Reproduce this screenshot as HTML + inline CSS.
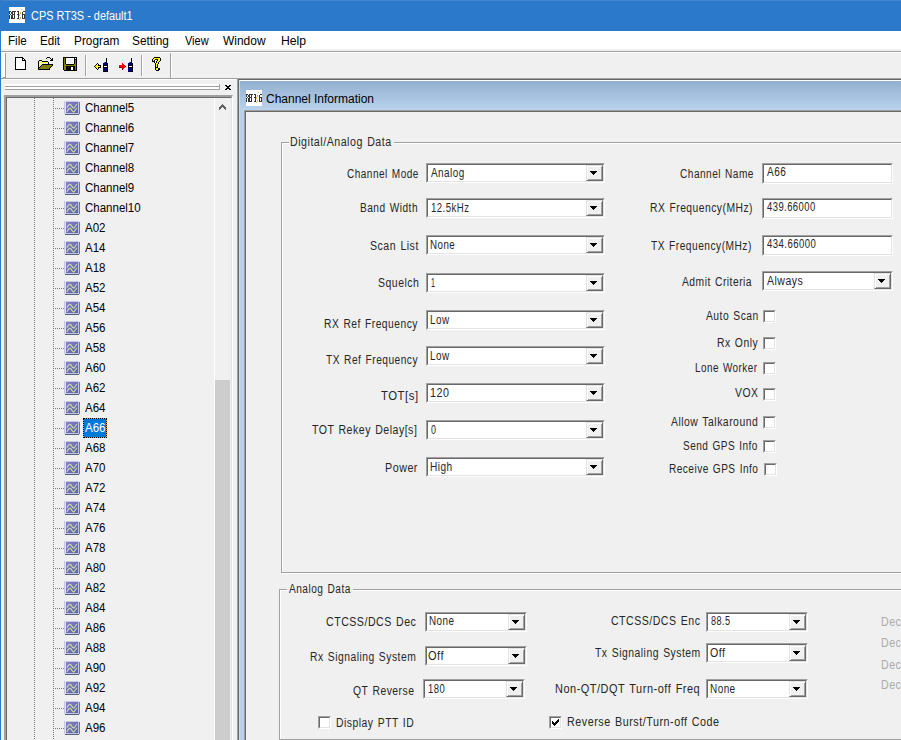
<!DOCTYPE html>
<html><head><meta charset="utf-8">
<style>
*{box-sizing:border-box}
html,body{margin:0;padding:0}
body{width:901px;height:740px;overflow:hidden;position:relative;background:#f0f0f0;font-family:"Liberation Sans",sans-serif}
.a{position:absolute}
.t{position:absolute;white-space:pre;font-size:12.5px;line-height:20px;transform-origin:0 0}
.cb{position:absolute;border-top:1px solid #a0a0a0;border-left:1px solid #a0a0a0;border-right:1px solid #fff;border-bottom:1px solid #fff}
.cbi{position:absolute;left:0;top:0;right:0;bottom:0;background:#fff;border-top:1px solid #696969;border-left:1px solid #696969;border-right:1px solid #e3e3e3;border-bottom:1px solid #e3e3e3}
.btn{position:absolute;right:0;top:0;bottom:0;width:17px;background:#f0f0f0;border-top:1px solid #e3e3e3;border-left:1px solid #e3e3e3;border-right:1px solid #696969;border-bottom:1px solid #696969;box-shadow:inset 1px 1px 0 #fff, inset -1px -1px 0 #a0a0a0}
.btn i{position:absolute;left:3px;top:5px;width:7px;height:4px;background:linear-gradient(#000,#000) 0 0/7px 1px no-repeat,linear-gradient(#000,#000) 1px 1px/5px 1px no-repeat,linear-gradient(#000,#000) 2px 2px/3px 1px no-repeat,linear-gradient(#000,#000) 3px 3px/1px 1px no-repeat}
.ck{position:absolute;width:13px;height:13px;border-top:1px solid #a0a0a0;border-left:1px solid #a0a0a0;border-right:1px solid #fff;border-bottom:1px solid #fff}
.cki{position:absolute;left:0;top:0;right:0;bottom:0;background:#fff;border-top:1px solid #696969;border-left:1px solid #696969;border-right:1px solid #e3e3e3;border-bottom:1px solid #e3e3e3}
.hd{position:absolute;left:55px;width:9px;height:1px;background:repeating-linear-gradient(90deg,#7a7a7a 0 1px,transparent 1px 2px)}
.ti{position:absolute;left:64px}
</style></head><body>
<svg width="0" height="0" style="position:absolute">
<defs>
<linearGradient id="ig" x1="0" y1="0" x2="1" y2="1"><stop offset="0" stop-color="#8a82cc"/><stop offset="1" stop-color="#5e5ca2"/></linearGradient>
<g id="ico">
<rect x="1" y="13" width="14" height="1" fill="#56607e"/>
<rect x="15" y="1" width="1" height="12" fill="#6a7490"/>
<rect x="0" y="0" width="15" height="13" fill="#c4c8e2"/>
<rect x="1" y="0" width="1" height="13" fill="#dfe3f2"/>
<rect x="2" y="1" width="12" height="11" fill="url(#ig)"/>
<path d="M3 6.8 C4.6 2.6, 6.4 2.4, 8 5.4 C9 7.2, 10 7.4, 10.8 6 L12.8 3" stroke="#c4dca4" stroke-width="1.15" fill="none"/>
<path d="M3 10.8 C4.6 6.6, 6.4 6.4, 8 9.4 C9 11.2, 10 11.4, 10.8 10 L12.8 7" stroke="#c4dca4" stroke-width="1.15" fill="none"/>
</g>
</defs></svg>

<!-- title bar -->
<div class="a" style="left:0;top:0;width:901px;height:31px;background:#2a79ca"></div>
<div class="a" style="left:0;top:0;width:901px;height:1px;background:#4284cc"></div>
<div class="a" style="left:0;top:0;width:1px;height:740px;background:#2b79c9"></div>
<div class="a" style="left:9px;top:7px;width:16px;height:16px;background:#fff"></div><svg class="a" style="left:9px;top:7px;" width="16" height="16" shape-rendering="crispEdges"><rect x="12" y="2" width="1" height="1" fill="#e8b050"/><rect x="0" y="4" width="2" height="1" fill="#383838"/><rect x="3" y="4" width="4" height="1" fill="#383838"/><rect x="8" y="4" width="2" height="1" fill="#383838"/><rect x="14" y="4" width="2" height="1" fill="#383838"/><rect x="0" y="5" width="1" height="1" fill="#383838"/><rect x="2" y="5" width="2" height="1" fill="#383838"/><rect x="5" y="5" width="1" height="1" fill="#383838"/><rect x="9" y="5" width="1" height="1" fill="#383838"/><rect x="11" y="5" width="1" height="1" fill="#e8b050"/><rect x="13" y="5" width="1" height="1" fill="#383838"/><rect x="0" y="6" width="1" height="1" fill="#383838"/><rect x="2" y="6" width="2" height="1" fill="#383838"/><rect x="5" y="6" width="1" height="1" fill="#383838"/><rect x="9" y="6" width="1" height="1" fill="#383838"/><rect x="11" y="6" width="1" height="1" fill="#e8b050"/><rect x="13" y="6" width="1" height="1" fill="#383838"/><rect x="1" y="7" width="1" height="1" fill="#383838"/><rect x="3" y="7" width="3" height="1" fill="#383838"/><rect x="8" y="7" width="2" height="1" fill="#383838"/><rect x="10" y="7" width="1" height="1" fill="#e8b050"/><rect x="13" y="7" width="3" height="1" fill="#383838"/><rect x="0" y="8" width="1" height="1" fill="#383838"/><rect x="2" y="8" width="2" height="1" fill="#383838"/><rect x="5" y="8" width="1" height="1" fill="#383838"/><rect x="9" y="8" width="1" height="1" fill="#383838"/><rect x="10" y="8" width="1" height="1" fill="#e8b050"/><rect x="13" y="8" width="1" height="1" fill="#383838"/><rect x="15" y="8" width="1" height="1" fill="#383838"/><rect x="0" y="9" width="1" height="1" fill="#383838"/><rect x="2" y="9" width="2" height="1" fill="#383838"/><rect x="5" y="9" width="1" height="1" fill="#383838"/><rect x="9" y="9" width="1" height="1" fill="#383838"/><rect x="13" y="9" width="1" height="1" fill="#383838"/><rect x="15" y="9" width="1" height="1" fill="#383838"/><rect x="0" y="10" width="1" height="1" fill="#383838"/><rect x="2" y="10" width="2" height="1" fill="#383838"/><rect x="5" y="10" width="1" height="1" fill="#383838"/><rect x="9" y="10" width="1" height="1" fill="#383838"/><rect x="11" y="10" width="1" height="1" fill="#e8b050"/><rect x="13" y="10" width="1" height="1" fill="#383838"/><rect x="15" y="10" width="1" height="1" fill="#383838"/><rect x="0" y="11" width="1" height="1" fill="#383838"/><rect x="2" y="11" width="4" height="1" fill="#383838"/><rect x="8" y="11" width="2" height="1" fill="#383838"/><rect x="11" y="11" width="1" height="1" fill="#e8b050"/><rect x="13" y="11" width="3" height="1" fill="#383838"/><rect x="10" y="12" width="1" height="1" fill="#e8b050"/></svg>
<!-- menu bar -->
<div class="a" style="left:1px;top:31px;width:900px;height:18px;background:#fff"></div>
<div class="a" style="left:1px;top:51px;width:900px;height:1px;background:#a0a0a0"></div>
<div class="a" style="left:1px;top:52px;width:900px;height:1px;background:#fff"></div>
<!-- toolbar -->
<div class="a" style="left:2px;top:53px;width:3px;height:24px;background:#fff"></div><div class="a" style="left:3px;top:77px;width:3px;height:1px;background:#a0a0a0"></div>
<div class="a" style="left:5px;top:53px;width:1px;height:25px;background:#a0a0a0"></div>
<div class="a" style="left:85px;top:55px;width:1px;height:21px;background:#a0a0a0"></div><div class="a" style="left:86px;top:55px;width:1px;height:21px;background:#fff"></div>
<div class="a" style="left:141px;top:55px;width:1px;height:21px;background:#a0a0a0"></div><div class="a" style="left:142px;top:55px;width:1px;height:21px;background:#fff"></div>
<div class="a" style="left:170px;top:53px;width:1px;height:25px;background:#a0a0a0"></div>
<div class="a" style="left:171px;top:53px;width:1px;height:25px;background:#fff"></div>
<div class="a" style="left:1px;top:78px;width:900px;height:1px;background:#a0a0a0"></div>
<div class="a" style="left:1px;top:79px;width:900px;height:1px;background:#fff"></div>
<!-- toolbar icons -->
<svg class="a" style="left:15px;top:57px;" width="11" height="13" shape-rendering="crispEdges"><rect x="0" y="0" width="8" height="1" fill="#000"/><rect x="0" y="1" width="1" height="1" fill="#000"/><rect x="1" y="1" width="6" height="1" fill="#fff"/><rect x="7" y="1" width="2" height="1" fill="#000"/><rect x="0" y="2" width="1" height="1" fill="#000"/><rect x="1" y="2" width="6" height="1" fill="#fff"/><rect x="7" y="2" width="1" height="1" fill="#000"/><rect x="8" y="2" width="1" height="1" fill="#fff"/><rect x="9" y="2" width="1" height="1" fill="#000"/><rect x="0" y="3" width="1" height="1" fill="#000"/><rect x="1" y="3" width="6" height="1" fill="#fff"/><rect x="7" y="3" width="4" height="1" fill="#000"/><rect x="0" y="4" width="1" height="1" fill="#000"/><rect x="1" y="4" width="9" height="1" fill="#fff"/><rect x="10" y="4" width="1" height="1" fill="#000"/><rect x="0" y="5" width="1" height="1" fill="#000"/><rect x="1" y="5" width="9" height="1" fill="#fff"/><rect x="10" y="5" width="1" height="1" fill="#000"/><rect x="0" y="6" width="1" height="1" fill="#000"/><rect x="1" y="6" width="9" height="1" fill="#fff"/><rect x="10" y="6" width="1" height="1" fill="#000"/><rect x="0" y="7" width="1" height="1" fill="#000"/><rect x="1" y="7" width="9" height="1" fill="#fff"/><rect x="10" y="7" width="1" height="1" fill="#000"/><rect x="0" y="8" width="1" height="1" fill="#000"/><rect x="1" y="8" width="9" height="1" fill="#fff"/><rect x="10" y="8" width="1" height="1" fill="#000"/><rect x="0" y="9" width="1" height="1" fill="#000"/><rect x="1" y="9" width="9" height="1" fill="#fff"/><rect x="10" y="9" width="1" height="1" fill="#000"/><rect x="0" y="10" width="1" height="1" fill="#000"/><rect x="1" y="10" width="9" height="1" fill="#fff"/><rect x="10" y="10" width="1" height="1" fill="#000"/><rect x="0" y="11" width="1" height="1" fill="#000"/><rect x="1" y="11" width="9" height="1" fill="#fff"/><rect x="10" y="11" width="1" height="1" fill="#000"/><rect x="0" y="12" width="11" height="1" fill="#000"/></svg>
<svg class="a" style="left:38px;top:57px;" width="16" height="13" shape-rendering="crispEdges"><rect x="9" y="0" width="3" height="1" fill="#000"/><rect x="8" y="1" width="1" height="1" fill="#000"/><rect x="12" y="1" width="1" height="1" fill="#000"/><rect x="14" y="1" width="1" height="1" fill="#000"/><rect x="13" y="2" width="2" height="1" fill="#000"/><rect x="1" y="3" width="3" height="1" fill="#000"/><rect x="12" y="3" width="3" height="1" fill="#000"/><rect x="0" y="4" width="1" height="1" fill="#000"/><rect x="1" y="4" width="1" height="1" fill="#ffff00"/><rect x="2" y="4" width="1" height="1" fill="#fff"/><rect x="3" y="4" width="1" height="1" fill="#ffff00"/><rect x="4" y="4" width="6" height="1" fill="#000"/><rect x="0" y="5" width="1" height="1" fill="#000"/><rect x="1" y="5" width="1" height="1" fill="#fff"/><rect x="2" y="5" width="1" height="1" fill="#ffff00"/><rect x="3" y="5" width="1" height="1" fill="#fff"/><rect x="4" y="5" width="1" height="1" fill="#ffff00"/><rect x="5" y="5" width="1" height="1" fill="#fff"/><rect x="6" y="5" width="1" height="1" fill="#ffff00"/><rect x="7" y="5" width="1" height="1" fill="#fff"/><rect x="8" y="5" width="1" height="1" fill="#ffff00"/><rect x="9" y="5" width="1" height="1" fill="#fff"/><rect x="10" y="5" width="1" height="1" fill="#000"/><rect x="0" y="6" width="1" height="1" fill="#000"/><rect x="1" y="6" width="1" height="1" fill="#ffff00"/><rect x="2" y="6" width="1" height="1" fill="#fff"/><rect x="3" y="6" width="1" height="1" fill="#ffff00"/><rect x="4" y="6" width="1" height="1" fill="#fff"/><rect x="5" y="6" width="1" height="1" fill="#ffff00"/><rect x="6" y="6" width="1" height="1" fill="#fff"/><rect x="7" y="6" width="1" height="1" fill="#ffff00"/><rect x="8" y="6" width="1" height="1" fill="#fff"/><rect x="9" y="6" width="1" height="1" fill="#ffff00"/><rect x="10" y="6" width="1" height="1" fill="#000"/><rect x="0" y="7" width="1" height="1" fill="#000"/><rect x="1" y="7" width="1" height="1" fill="#fff"/><rect x="2" y="7" width="1" height="1" fill="#ffff00"/><rect x="3" y="7" width="1" height="1" fill="#fff"/><rect x="4" y="7" width="11" height="1" fill="#000"/><rect x="0" y="8" width="1" height="1" fill="#000"/><rect x="1" y="8" width="1" height="1" fill="#ffff00"/><rect x="2" y="8" width="1" height="1" fill="#fff"/><rect x="3" y="8" width="1" height="1" fill="#000"/><rect x="4" y="8" width="10" height="1" fill="#808000"/><rect x="14" y="8" width="1" height="1" fill="#000"/><rect x="0" y="9" width="1" height="1" fill="#000"/><rect x="1" y="9" width="1" height="1" fill="#fff"/><rect x="2" y="9" width="1" height="1" fill="#000"/><rect x="3" y="9" width="10" height="1" fill="#808000"/><rect x="13" y="9" width="1" height="1" fill="#000"/><rect x="0" y="10" width="2" height="1" fill="#000"/><rect x="2" y="10" width="10" height="1" fill="#808000"/><rect x="12" y="10" width="1" height="1" fill="#000"/><rect x="0" y="11" width="1" height="1" fill="#000"/><rect x="1" y="11" width="10" height="1" fill="#808000"/><rect x="11" y="11" width="1" height="1" fill="#000"/><rect x="0" y="12" width="12" height="1" fill="#000"/></svg>
<svg class="a" style="left:63px;top:57px;" width="14" height="14" shape-rendering="crispEdges"><rect x="0" y="0" width="14" height="1" fill="#000"/><rect x="0" y="1" width="1" height="1" fill="#000"/><rect x="1" y="1" width="1" height="1" fill="#808000"/><rect x="2" y="1" width="1" height="1" fill="#000"/><rect x="3" y="1" width="8" height="1" fill="#fff"/><rect x="11" y="1" width="1" height="1" fill="#000"/><rect x="12" y="1" width="1" height="1" fill="#fff"/><rect x="13" y="1" width="1" height="1" fill="#000"/><rect x="0" y="2" width="1" height="1" fill="#000"/><rect x="1" y="2" width="1" height="1" fill="#808000"/><rect x="2" y="2" width="1" height="1" fill="#000"/><rect x="3" y="2" width="1" height="1" fill="#fff"/><rect x="4" y="2" width="6" height="1" fill="#f0f0f0"/><rect x="10" y="2" width="1" height="1" fill="#fff"/><rect x="11" y="2" width="3" height="1" fill="#000"/><rect x="0" y="3" width="1" height="1" fill="#000"/><rect x="1" y="3" width="1" height="1" fill="#808000"/><rect x="2" y="3" width="1" height="1" fill="#000"/><rect x="3" y="3" width="1" height="1" fill="#fff"/><rect x="4" y="3" width="6" height="1" fill="#f0f0f0"/><rect x="10" y="3" width="1" height="1" fill="#fff"/><rect x="11" y="3" width="1" height="1" fill="#000"/><rect x="12" y="3" width="1" height="1" fill="#808000"/><rect x="13" y="3" width="1" height="1" fill="#000"/><rect x="0" y="4" width="1" height="1" fill="#000"/><rect x="1" y="4" width="1" height="1" fill="#808000"/><rect x="2" y="4" width="1" height="1" fill="#000"/><rect x="3" y="4" width="1" height="1" fill="#fff"/><rect x="4" y="4" width="6" height="1" fill="#f0f0f0"/><rect x="10" y="4" width="1" height="1" fill="#fff"/><rect x="11" y="4" width="1" height="1" fill="#000"/><rect x="12" y="4" width="1" height="1" fill="#808000"/><rect x="13" y="4" width="1" height="1" fill="#000"/><rect x="0" y="5" width="1" height="1" fill="#000"/><rect x="1" y="5" width="1" height="1" fill="#808000"/><rect x="2" y="5" width="1" height="1" fill="#000"/><rect x="3" y="5" width="1" height="1" fill="#fff"/><rect x="4" y="5" width="6" height="1" fill="#f0f0f0"/><rect x="10" y="5" width="1" height="1" fill="#fff"/><rect x="11" y="5" width="1" height="1" fill="#000"/><rect x="12" y="5" width="1" height="1" fill="#808000"/><rect x="13" y="5" width="1" height="1" fill="#000"/><rect x="0" y="6" width="1" height="1" fill="#000"/><rect x="1" y="6" width="1" height="1" fill="#808000"/><rect x="2" y="6" width="1" height="1" fill="#000"/><rect x="3" y="6" width="8" height="1" fill="#fff"/><rect x="11" y="6" width="1" height="1" fill="#000"/><rect x="12" y="6" width="1" height="1" fill="#808000"/><rect x="13" y="6" width="1" height="1" fill="#000"/><rect x="0" y="7" width="1" height="1" fill="#000"/><rect x="1" y="7" width="2" height="1" fill="#808000"/><rect x="3" y="7" width="8" height="1" fill="#000"/><rect x="11" y="7" width="2" height="1" fill="#808000"/><rect x="13" y="7" width="1" height="1" fill="#000"/><rect x="0" y="8" width="1" height="1" fill="#000"/><rect x="1" y="8" width="12" height="1" fill="#808000"/><rect x="13" y="8" width="1" height="1" fill="#000"/><rect x="0" y="9" width="1" height="1" fill="#000"/><rect x="1" y="9" width="2" height="1" fill="#808000"/><rect x="3" y="9" width="9" height="1" fill="#000"/><rect x="12" y="9" width="1" height="1" fill="#808000"/><rect x="13" y="9" width="1" height="1" fill="#000"/><rect x="0" y="10" width="1" height="1" fill="#000"/><rect x="1" y="10" width="2" height="1" fill="#808000"/><rect x="3" y="10" width="5" height="1" fill="#000"/><rect x="8" y="10" width="2" height="1" fill="#fff"/><rect x="10" y="10" width="2" height="1" fill="#000"/><rect x="12" y="10" width="1" height="1" fill="#808000"/><rect x="13" y="10" width="1" height="1" fill="#000"/><rect x="0" y="11" width="1" height="1" fill="#000"/><rect x="1" y="11" width="2" height="1" fill="#808000"/><rect x="3" y="11" width="5" height="1" fill="#000"/><rect x="8" y="11" width="2" height="1" fill="#fff"/><rect x="10" y="11" width="2" height="1" fill="#000"/><rect x="12" y="11" width="1" height="1" fill="#808000"/><rect x="13" y="11" width="1" height="1" fill="#000"/><rect x="0" y="12" width="1" height="1" fill="#000"/><rect x="1" y="12" width="2" height="1" fill="#808000"/><rect x="3" y="12" width="5" height="1" fill="#000"/><rect x="8" y="12" width="2" height="1" fill="#fff"/><rect x="10" y="12" width="2" height="1" fill="#000"/><rect x="12" y="12" width="1" height="1" fill="#808000"/><rect x="13" y="12" width="1" height="1" fill="#000"/><rect x="0" y="13" width="1" height="1" fill="#fff"/><rect x="1" y="13" width="13" height="1" fill="#000"/></svg>
<svg class="a" style="left:96px;top:58px;" width="15" height="14" shape-rendering="crispEdges"><rect x="10" y="0" width="1" height="1" fill="#000"/><rect x="10" y="1" width="1" height="1" fill="#000"/><rect x="10" y="2" width="1" height="1" fill="#000"/><rect x="10" y="3" width="1" height="1" fill="#000"/><rect x="8" y="4" width="1" height="1" fill="#008080"/><rect x="9" y="4" width="1" height="1" fill="#000084"/><rect x="10" y="4" width="1" height="1" fill="#000"/><rect x="7" y="5" width="4" height="1" fill="#000084"/><rect x="11" y="5" width="1" height="1" fill="#000"/><rect x="7" y="6" width="4" height="1" fill="#000084"/><rect x="11" y="6" width="1" height="1" fill="#000"/><rect x="7" y="7" width="5" height="1" fill="#000"/><rect x="7" y="8" width="1" height="1" fill="#000"/><rect x="8" y="8" width="3" height="1" fill="#fff"/><rect x="11" y="8" width="1" height="1" fill="#000"/><rect x="7" y="9" width="5" height="1" fill="#000"/><rect x="7" y="10" width="4" height="1" fill="#000084"/><rect x="11" y="10" width="1" height="1" fill="#000"/><rect x="7" y="11" width="4" height="1" fill="#000084"/><rect x="11" y="11" width="1" height="1" fill="#000"/><rect x="7" y="12" width="4" height="1" fill="#000084"/><rect x="11" y="12" width="1" height="1" fill="#000"/><rect x="7" y="13" width="1" height="1" fill="#000084"/><rect x="8" y="13" width="4" height="1" fill="#000"/></svg>
<svg class="a" style="left:121px;top:58px;" width="15" height="14" shape-rendering="crispEdges"><rect x="10" y="0" width="1" height="1" fill="#000"/><rect x="10" y="1" width="1" height="1" fill="#000"/><rect x="10" y="2" width="1" height="1" fill="#000"/><rect x="10" y="3" width="1" height="1" fill="#000"/><rect x="8" y="4" width="1" height="1" fill="#008080"/><rect x="9" y="4" width="1" height="1" fill="#000084"/><rect x="10" y="4" width="1" height="1" fill="#000"/><rect x="7" y="5" width="4" height="1" fill="#000084"/><rect x="11" y="5" width="1" height="1" fill="#000"/><rect x="7" y="6" width="4" height="1" fill="#000084"/><rect x="11" y="6" width="1" height="1" fill="#000"/><rect x="7" y="7" width="5" height="1" fill="#000"/><rect x="7" y="8" width="1" height="1" fill="#000"/><rect x="8" y="8" width="3" height="1" fill="#fff"/><rect x="11" y="8" width="1" height="1" fill="#000"/><rect x="7" y="9" width="5" height="1" fill="#000"/><rect x="7" y="10" width="4" height="1" fill="#000084"/><rect x="11" y="10" width="1" height="1" fill="#000"/><rect x="7" y="11" width="4" height="1" fill="#000084"/><rect x="11" y="11" width="1" height="1" fill="#000"/><rect x="7" y="12" width="4" height="1" fill="#000084"/><rect x="11" y="12" width="1" height="1" fill="#000"/><rect x="7" y="13" width="1" height="1" fill="#000084"/><rect x="8" y="13" width="4" height="1" fill="#000"/></svg>
<svg class="a" style="left:93px;top:63px;" width="8" height="7" shape-rendering="crispEdges"><rect x="4" y="0" width="1" height="1" fill="#000"/><rect x="3" y="1" width="1" height="1" fill="#000"/><rect x="4" y="1" width="1" height="1" fill="#ffff00"/><rect x="5" y="1" width="1" height="1" fill="#000"/><rect x="2" y="2" width="1" height="1" fill="#000"/><rect x="3" y="2" width="2" height="1" fill="#ffff00"/><rect x="5" y="2" width="3" height="1" fill="#000"/><rect x="1" y="3" width="1" height="1" fill="#000"/><rect x="2" y="3" width="5" height="1" fill="#ffff00"/><rect x="7" y="3" width="1" height="1" fill="#000"/><rect x="2" y="4" width="1" height="1" fill="#000"/><rect x="3" y="4" width="2" height="1" fill="#ffff00"/><rect x="5" y="4" width="3" height="1" fill="#000"/><rect x="3" y="5" width="1" height="1" fill="#000"/><rect x="4" y="5" width="1" height="1" fill="#ffff00"/><rect x="5" y="5" width="1" height="1" fill="#000"/><rect x="4" y="6" width="1" height="1" fill="#000"/></svg>
<svg class="a" style="left:119px;top:63px;" width="7" height="7" shape-rendering="crispEdges"><rect x="3" y="0" width="1" height="1" fill="#ff0000"/><rect x="3" y="1" width="2" height="1" fill="#ff0000"/><rect x="0" y="2" width="6" height="1" fill="#ff0000"/><rect x="0" y="3" width="6" height="1" fill="#ff0000"/><rect x="6" y="3" width="1" height="1" fill="#000"/><rect x="0" y="4" width="3" height="1" fill="#800000"/><rect x="3" y="4" width="3" height="1" fill="#ff0000"/><rect x="3" y="5" width="1" height="1" fill="#800000"/><rect x="4" y="5" width="1" height="1" fill="#ff0000"/><rect x="3" y="6" width="1" height="1" fill="#800000"/></svg>
<svg class="a" style="left:150px;top:57px;" width="11" height="14" shape-rendering="crispEdges"><rect x="4" y="0" width="6" height="1" fill="#000"/><rect x="3" y="1" width="1" height="1" fill="#000"/><rect x="4" y="1" width="6" height="1" fill="#ffff00"/><rect x="10" y="1" width="1" height="1" fill="#000"/><rect x="2" y="2" width="1" height="1" fill="#000"/><rect x="3" y="2" width="2" height="1" fill="#ffff00"/><rect x="5" y="2" width="3" height="1" fill="#000"/><rect x="8" y="2" width="2" height="1" fill="#ffff00"/><rect x="10" y="2" width="1" height="1" fill="#000"/><rect x="2" y="3" width="1" height="1" fill="#000"/><rect x="3" y="3" width="1" height="1" fill="#ffff00"/><rect x="4" y="3" width="1" height="1" fill="#000"/><rect x="6" y="3" width="1" height="1" fill="#fff"/><rect x="7" y="3" width="1" height="1" fill="#000"/><rect x="8" y="3" width="2" height="1" fill="#ffff00"/><rect x="10" y="3" width="1" height="1" fill="#000"/><rect x="2" y="4" width="3" height="1" fill="#000"/><rect x="6" y="4" width="1" height="1" fill="#000"/><rect x="7" y="4" width="2" height="1" fill="#ffff00"/><rect x="9" y="4" width="1" height="1" fill="#000"/><rect x="4" y="5" width="1" height="1" fill="#000"/><rect x="5" y="5" width="1" height="1" fill="#fff"/><rect x="6" y="5" width="1" height="1" fill="#000"/><rect x="7" y="5" width="1" height="1" fill="#ffff00"/><rect x="8" y="5" width="1" height="1" fill="#000"/><rect x="5" y="6" width="1" height="1" fill="#000"/><rect x="6" y="6" width="2" height="1" fill="#ffff00"/><rect x="8" y="6" width="1" height="1" fill="#000"/><rect x="5" y="7" width="1" height="1" fill="#000"/><rect x="6" y="7" width="1" height="1" fill="#ffff00"/><rect x="7" y="7" width="1" height="1" fill="#000"/><rect x="5" y="8" width="1" height="1" fill="#000"/><rect x="6" y="8" width="1" height="1" fill="#ffff00"/><rect x="7" y="8" width="1" height="1" fill="#000"/><rect x="5" y="9" width="1" height="1" fill="#000"/><rect x="6" y="9" width="1" height="1" fill="#ffff00"/><rect x="7" y="9" width="1" height="1" fill="#000"/><rect x="5" y="10" width="3" height="1" fill="#000"/><rect x="5" y="11" width="1" height="1" fill="#000"/><rect x="6" y="11" width="2" height="1" fill="#ffff00"/><rect x="8" y="11" width="2" height="1" fill="#000"/><rect x="5" y="12" width="1" height="1" fill="#000"/><rect x="6" y="12" width="2" height="1" fill="#ffff00"/><rect x="8" y="12" width="2" height="1" fill="#000"/><rect x="6" y="13" width="3" height="1" fill="#000"/></svg>
<!-- dock panel -->
<div class="a" style="left:5px;top:84px;width:214px;height:2px;background:#fff"></div>
<div class="a" style="left:5px;top:86px;width:215px;height:1px;background:#a0a0a0"></div>
<div class="a" style="left:5px;top:87px;width:214px;height:2px;background:#fff"></div>
<div class="a" style="left:5px;top:89px;width:215px;height:1px;background:#a0a0a0"></div>
<div class="a" style="left:219px;top:84px;width:1px;height:6px;background:#a0a0a0"></div>
<svg class="a" style="left:225px;top:85px;" width="6" height="5" shape-rendering="crispEdges"><rect x="0" y="0" width="2" height="1" fill="#000"/><rect x="4" y="0" width="2" height="1" fill="#000"/><rect x="1" y="1" width="4" height="1" fill="#000"/><rect x="2" y="2" width="2" height="1" fill="#000"/><rect x="1" y="3" width="4" height="1" fill="#000"/><rect x="0" y="4" width="2" height="1" fill="#000"/><rect x="4" y="4" width="2" height="1" fill="#000"/></svg>
<!-- tree border -->
<div class="a" style="left:4px;top:95px;width:229px;height:645px;border-top:2px solid #a0a0a0;border-left:2px solid #a0a0a0;border-right:1px solid #fff"></div>
<div class="a" style="left:6px;top:97px;width:226px;height:643px;border-top:1px solid #696969;border-left:1px solid #696969;border-right:1px solid #e3e3e3"></div>
<!-- tree lines -->
<div class="a" style="left:34px;top:98px;width:1px;height:642px;background:repeating-linear-gradient(180deg,#7a7a7a 0 1px,transparent 1px 2px)"></div>
<div class="a" style="left:53px;top:98px;width:1px;height:642px;background:repeating-linear-gradient(180deg,#7a7a7a 0 1px,transparent 1px 2px)"></div>
<div class="hd" style="top:108px"></div><svg class="ti" style="top:101px" width="16" height="14">
<rect x="1" y="13" width="14" height="1" fill="#56607e"/>
<rect x="15" y="1" width="1" height="12" fill="#6a7490"/>
<rect x="0" y="0" width="15" height="13" fill="#c4c8e2"/>
<rect x="1" y="0" width="1" height="13" fill="#dfe3f2"/>
<rect x="2" y="1" width="12" height="11" fill="url(#ig)"/>
<path d="M3 6.8 C4.6 2.6, 6.4 2.4, 8 5.4 C9 7.2, 10 7.4, 10.8 6 L12.8 3" stroke="#c4dca4" stroke-width="1.15" fill="none"/>
<path d="M3 10.8 C4.6 6.6, 6.4 6.4, 8 9.4 C9 11.2, 10 11.4, 10.8 10 L12.8 7" stroke="#c4dca4" stroke-width="1.15" fill="none"/>
</svg>
<div class="hd" style="top:128px"></div><svg class="ti" style="top:121px" width="16" height="14">
<rect x="1" y="13" width="14" height="1" fill="#56607e"/>
<rect x="15" y="1" width="1" height="12" fill="#6a7490"/>
<rect x="0" y="0" width="15" height="13" fill="#c4c8e2"/>
<rect x="1" y="0" width="1" height="13" fill="#dfe3f2"/>
<rect x="2" y="1" width="12" height="11" fill="url(#ig)"/>
<path d="M3 6.8 C4.6 2.6, 6.4 2.4, 8 5.4 C9 7.2, 10 7.4, 10.8 6 L12.8 3" stroke="#c4dca4" stroke-width="1.15" fill="none"/>
<path d="M3 10.8 C4.6 6.6, 6.4 6.4, 8 9.4 C9 11.2, 10 11.4, 10.8 10 L12.8 7" stroke="#c4dca4" stroke-width="1.15" fill="none"/>
</svg>
<div class="hd" style="top:148px"></div><svg class="ti" style="top:141px" width="16" height="14">
<rect x="1" y="13" width="14" height="1" fill="#56607e"/>
<rect x="15" y="1" width="1" height="12" fill="#6a7490"/>
<rect x="0" y="0" width="15" height="13" fill="#c4c8e2"/>
<rect x="1" y="0" width="1" height="13" fill="#dfe3f2"/>
<rect x="2" y="1" width="12" height="11" fill="url(#ig)"/>
<path d="M3 6.8 C4.6 2.6, 6.4 2.4, 8 5.4 C9 7.2, 10 7.4, 10.8 6 L12.8 3" stroke="#c4dca4" stroke-width="1.15" fill="none"/>
<path d="M3 10.8 C4.6 6.6, 6.4 6.4, 8 9.4 C9 11.2, 10 11.4, 10.8 10 L12.8 7" stroke="#c4dca4" stroke-width="1.15" fill="none"/>
</svg>
<div class="hd" style="top:168px"></div><svg class="ti" style="top:161px" width="16" height="14">
<rect x="1" y="13" width="14" height="1" fill="#56607e"/>
<rect x="15" y="1" width="1" height="12" fill="#6a7490"/>
<rect x="0" y="0" width="15" height="13" fill="#c4c8e2"/>
<rect x="1" y="0" width="1" height="13" fill="#dfe3f2"/>
<rect x="2" y="1" width="12" height="11" fill="url(#ig)"/>
<path d="M3 6.8 C4.6 2.6, 6.4 2.4, 8 5.4 C9 7.2, 10 7.4, 10.8 6 L12.8 3" stroke="#c4dca4" stroke-width="1.15" fill="none"/>
<path d="M3 10.8 C4.6 6.6, 6.4 6.4, 8 9.4 C9 11.2, 10 11.4, 10.8 10 L12.8 7" stroke="#c4dca4" stroke-width="1.15" fill="none"/>
</svg>
<div class="hd" style="top:188px"></div><svg class="ti" style="top:181px" width="16" height="14">
<rect x="1" y="13" width="14" height="1" fill="#56607e"/>
<rect x="15" y="1" width="1" height="12" fill="#6a7490"/>
<rect x="0" y="0" width="15" height="13" fill="#c4c8e2"/>
<rect x="1" y="0" width="1" height="13" fill="#dfe3f2"/>
<rect x="2" y="1" width="12" height="11" fill="url(#ig)"/>
<path d="M3 6.8 C4.6 2.6, 6.4 2.4, 8 5.4 C9 7.2, 10 7.4, 10.8 6 L12.8 3" stroke="#c4dca4" stroke-width="1.15" fill="none"/>
<path d="M3 10.8 C4.6 6.6, 6.4 6.4, 8 9.4 C9 11.2, 10 11.4, 10.8 10 L12.8 7" stroke="#c4dca4" stroke-width="1.15" fill="none"/>
</svg>
<div class="hd" style="top:208px"></div><svg class="ti" style="top:201px" width="16" height="14">
<rect x="1" y="13" width="14" height="1" fill="#56607e"/>
<rect x="15" y="1" width="1" height="12" fill="#6a7490"/>
<rect x="0" y="0" width="15" height="13" fill="#c4c8e2"/>
<rect x="1" y="0" width="1" height="13" fill="#dfe3f2"/>
<rect x="2" y="1" width="12" height="11" fill="url(#ig)"/>
<path d="M3 6.8 C4.6 2.6, 6.4 2.4, 8 5.4 C9 7.2, 10 7.4, 10.8 6 L12.8 3" stroke="#c4dca4" stroke-width="1.15" fill="none"/>
<path d="M3 10.8 C4.6 6.6, 6.4 6.4, 8 9.4 C9 11.2, 10 11.4, 10.8 10 L12.8 7" stroke="#c4dca4" stroke-width="1.15" fill="none"/>
</svg>
<div class="hd" style="top:228px"></div><svg class="ti" style="top:221px" width="16" height="14">
<rect x="1" y="13" width="14" height="1" fill="#56607e"/>
<rect x="15" y="1" width="1" height="12" fill="#6a7490"/>
<rect x="0" y="0" width="15" height="13" fill="#c4c8e2"/>
<rect x="1" y="0" width="1" height="13" fill="#dfe3f2"/>
<rect x="2" y="1" width="12" height="11" fill="url(#ig)"/>
<path d="M3 6.8 C4.6 2.6, 6.4 2.4, 8 5.4 C9 7.2, 10 7.4, 10.8 6 L12.8 3" stroke="#c4dca4" stroke-width="1.15" fill="none"/>
<path d="M3 10.8 C4.6 6.6, 6.4 6.4, 8 9.4 C9 11.2, 10 11.4, 10.8 10 L12.8 7" stroke="#c4dca4" stroke-width="1.15" fill="none"/>
</svg>
<div class="hd" style="top:248px"></div><svg class="ti" style="top:241px" width="16" height="14">
<rect x="1" y="13" width="14" height="1" fill="#56607e"/>
<rect x="15" y="1" width="1" height="12" fill="#6a7490"/>
<rect x="0" y="0" width="15" height="13" fill="#c4c8e2"/>
<rect x="1" y="0" width="1" height="13" fill="#dfe3f2"/>
<rect x="2" y="1" width="12" height="11" fill="url(#ig)"/>
<path d="M3 6.8 C4.6 2.6, 6.4 2.4, 8 5.4 C9 7.2, 10 7.4, 10.8 6 L12.8 3" stroke="#c4dca4" stroke-width="1.15" fill="none"/>
<path d="M3 10.8 C4.6 6.6, 6.4 6.4, 8 9.4 C9 11.2, 10 11.4, 10.8 10 L12.8 7" stroke="#c4dca4" stroke-width="1.15" fill="none"/>
</svg>
<div class="hd" style="top:268px"></div><svg class="ti" style="top:261px" width="16" height="14">
<rect x="1" y="13" width="14" height="1" fill="#56607e"/>
<rect x="15" y="1" width="1" height="12" fill="#6a7490"/>
<rect x="0" y="0" width="15" height="13" fill="#c4c8e2"/>
<rect x="1" y="0" width="1" height="13" fill="#dfe3f2"/>
<rect x="2" y="1" width="12" height="11" fill="url(#ig)"/>
<path d="M3 6.8 C4.6 2.6, 6.4 2.4, 8 5.4 C9 7.2, 10 7.4, 10.8 6 L12.8 3" stroke="#c4dca4" stroke-width="1.15" fill="none"/>
<path d="M3 10.8 C4.6 6.6, 6.4 6.4, 8 9.4 C9 11.2, 10 11.4, 10.8 10 L12.8 7" stroke="#c4dca4" stroke-width="1.15" fill="none"/>
</svg>
<div class="hd" style="top:288px"></div><svg class="ti" style="top:281px" width="16" height="14">
<rect x="1" y="13" width="14" height="1" fill="#56607e"/>
<rect x="15" y="1" width="1" height="12" fill="#6a7490"/>
<rect x="0" y="0" width="15" height="13" fill="#c4c8e2"/>
<rect x="1" y="0" width="1" height="13" fill="#dfe3f2"/>
<rect x="2" y="1" width="12" height="11" fill="url(#ig)"/>
<path d="M3 6.8 C4.6 2.6, 6.4 2.4, 8 5.4 C9 7.2, 10 7.4, 10.8 6 L12.8 3" stroke="#c4dca4" stroke-width="1.15" fill="none"/>
<path d="M3 10.8 C4.6 6.6, 6.4 6.4, 8 9.4 C9 11.2, 10 11.4, 10.8 10 L12.8 7" stroke="#c4dca4" stroke-width="1.15" fill="none"/>
</svg>
<div class="hd" style="top:308px"></div><svg class="ti" style="top:301px" width="16" height="14">
<rect x="1" y="13" width="14" height="1" fill="#56607e"/>
<rect x="15" y="1" width="1" height="12" fill="#6a7490"/>
<rect x="0" y="0" width="15" height="13" fill="#c4c8e2"/>
<rect x="1" y="0" width="1" height="13" fill="#dfe3f2"/>
<rect x="2" y="1" width="12" height="11" fill="url(#ig)"/>
<path d="M3 6.8 C4.6 2.6, 6.4 2.4, 8 5.4 C9 7.2, 10 7.4, 10.8 6 L12.8 3" stroke="#c4dca4" stroke-width="1.15" fill="none"/>
<path d="M3 10.8 C4.6 6.6, 6.4 6.4, 8 9.4 C9 11.2, 10 11.4, 10.8 10 L12.8 7" stroke="#c4dca4" stroke-width="1.15" fill="none"/>
</svg>
<div class="hd" style="top:328px"></div><svg class="ti" style="top:321px" width="16" height="14">
<rect x="1" y="13" width="14" height="1" fill="#56607e"/>
<rect x="15" y="1" width="1" height="12" fill="#6a7490"/>
<rect x="0" y="0" width="15" height="13" fill="#c4c8e2"/>
<rect x="1" y="0" width="1" height="13" fill="#dfe3f2"/>
<rect x="2" y="1" width="12" height="11" fill="url(#ig)"/>
<path d="M3 6.8 C4.6 2.6, 6.4 2.4, 8 5.4 C9 7.2, 10 7.4, 10.8 6 L12.8 3" stroke="#c4dca4" stroke-width="1.15" fill="none"/>
<path d="M3 10.8 C4.6 6.6, 6.4 6.4, 8 9.4 C9 11.2, 10 11.4, 10.8 10 L12.8 7" stroke="#c4dca4" stroke-width="1.15" fill="none"/>
</svg>
<div class="hd" style="top:348px"></div><svg class="ti" style="top:341px" width="16" height="14">
<rect x="1" y="13" width="14" height="1" fill="#56607e"/>
<rect x="15" y="1" width="1" height="12" fill="#6a7490"/>
<rect x="0" y="0" width="15" height="13" fill="#c4c8e2"/>
<rect x="1" y="0" width="1" height="13" fill="#dfe3f2"/>
<rect x="2" y="1" width="12" height="11" fill="url(#ig)"/>
<path d="M3 6.8 C4.6 2.6, 6.4 2.4, 8 5.4 C9 7.2, 10 7.4, 10.8 6 L12.8 3" stroke="#c4dca4" stroke-width="1.15" fill="none"/>
<path d="M3 10.8 C4.6 6.6, 6.4 6.4, 8 9.4 C9 11.2, 10 11.4, 10.8 10 L12.8 7" stroke="#c4dca4" stroke-width="1.15" fill="none"/>
</svg>
<div class="hd" style="top:368px"></div><svg class="ti" style="top:361px" width="16" height="14">
<rect x="1" y="13" width="14" height="1" fill="#56607e"/>
<rect x="15" y="1" width="1" height="12" fill="#6a7490"/>
<rect x="0" y="0" width="15" height="13" fill="#c4c8e2"/>
<rect x="1" y="0" width="1" height="13" fill="#dfe3f2"/>
<rect x="2" y="1" width="12" height="11" fill="url(#ig)"/>
<path d="M3 6.8 C4.6 2.6, 6.4 2.4, 8 5.4 C9 7.2, 10 7.4, 10.8 6 L12.8 3" stroke="#c4dca4" stroke-width="1.15" fill="none"/>
<path d="M3 10.8 C4.6 6.6, 6.4 6.4, 8 9.4 C9 11.2, 10 11.4, 10.8 10 L12.8 7" stroke="#c4dca4" stroke-width="1.15" fill="none"/>
</svg>
<div class="hd" style="top:388px"></div><svg class="ti" style="top:381px" width="16" height="14">
<rect x="1" y="13" width="14" height="1" fill="#56607e"/>
<rect x="15" y="1" width="1" height="12" fill="#6a7490"/>
<rect x="0" y="0" width="15" height="13" fill="#c4c8e2"/>
<rect x="1" y="0" width="1" height="13" fill="#dfe3f2"/>
<rect x="2" y="1" width="12" height="11" fill="url(#ig)"/>
<path d="M3 6.8 C4.6 2.6, 6.4 2.4, 8 5.4 C9 7.2, 10 7.4, 10.8 6 L12.8 3" stroke="#c4dca4" stroke-width="1.15" fill="none"/>
<path d="M3 10.8 C4.6 6.6, 6.4 6.4, 8 9.4 C9 11.2, 10 11.4, 10.8 10 L12.8 7" stroke="#c4dca4" stroke-width="1.15" fill="none"/>
</svg>
<div class="hd" style="top:408px"></div><svg class="ti" style="top:401px" width="16" height="14">
<rect x="1" y="13" width="14" height="1" fill="#56607e"/>
<rect x="15" y="1" width="1" height="12" fill="#6a7490"/>
<rect x="0" y="0" width="15" height="13" fill="#c4c8e2"/>
<rect x="1" y="0" width="1" height="13" fill="#dfe3f2"/>
<rect x="2" y="1" width="12" height="11" fill="url(#ig)"/>
<path d="M3 6.8 C4.6 2.6, 6.4 2.4, 8 5.4 C9 7.2, 10 7.4, 10.8 6 L12.8 3" stroke="#c4dca4" stroke-width="1.15" fill="none"/>
<path d="M3 10.8 C4.6 6.6, 6.4 6.4, 8 9.4 C9 11.2, 10 11.4, 10.8 10 L12.8 7" stroke="#c4dca4" stroke-width="1.15" fill="none"/>
</svg>
<div class="hd" style="top:428px"></div><svg class="ti" style="top:421px" width="16" height="14">
<rect x="1" y="13" width="14" height="1" fill="#56607e"/>
<rect x="15" y="1" width="1" height="12" fill="#6a7490"/>
<rect x="0" y="0" width="15" height="13" fill="#c4c8e2"/>
<rect x="1" y="0" width="1" height="13" fill="#dfe3f2"/>
<rect x="2" y="1" width="12" height="11" fill="url(#ig)"/>
<path d="M3 6.8 C4.6 2.6, 6.4 2.4, 8 5.4 C9 7.2, 10 7.4, 10.8 6 L12.8 3" stroke="#c4dca4" stroke-width="1.15" fill="none"/>
<path d="M3 10.8 C4.6 6.6, 6.4 6.4, 8 9.4 C9 11.2, 10 11.4, 10.8 10 L12.8 7" stroke="#c4dca4" stroke-width="1.15" fill="none"/>
</svg>
<div class="hd" style="top:448px"></div><svg class="ti" style="top:441px" width="16" height="14">
<rect x="1" y="13" width="14" height="1" fill="#56607e"/>
<rect x="15" y="1" width="1" height="12" fill="#6a7490"/>
<rect x="0" y="0" width="15" height="13" fill="#c4c8e2"/>
<rect x="1" y="0" width="1" height="13" fill="#dfe3f2"/>
<rect x="2" y="1" width="12" height="11" fill="url(#ig)"/>
<path d="M3 6.8 C4.6 2.6, 6.4 2.4, 8 5.4 C9 7.2, 10 7.4, 10.8 6 L12.8 3" stroke="#c4dca4" stroke-width="1.15" fill="none"/>
<path d="M3 10.8 C4.6 6.6, 6.4 6.4, 8 9.4 C9 11.2, 10 11.4, 10.8 10 L12.8 7" stroke="#c4dca4" stroke-width="1.15" fill="none"/>
</svg>
<div class="hd" style="top:468px"></div><svg class="ti" style="top:461px" width="16" height="14">
<rect x="1" y="13" width="14" height="1" fill="#56607e"/>
<rect x="15" y="1" width="1" height="12" fill="#6a7490"/>
<rect x="0" y="0" width="15" height="13" fill="#c4c8e2"/>
<rect x="1" y="0" width="1" height="13" fill="#dfe3f2"/>
<rect x="2" y="1" width="12" height="11" fill="url(#ig)"/>
<path d="M3 6.8 C4.6 2.6, 6.4 2.4, 8 5.4 C9 7.2, 10 7.4, 10.8 6 L12.8 3" stroke="#c4dca4" stroke-width="1.15" fill="none"/>
<path d="M3 10.8 C4.6 6.6, 6.4 6.4, 8 9.4 C9 11.2, 10 11.4, 10.8 10 L12.8 7" stroke="#c4dca4" stroke-width="1.15" fill="none"/>
</svg>
<div class="hd" style="top:488px"></div><svg class="ti" style="top:481px" width="16" height="14">
<rect x="1" y="13" width="14" height="1" fill="#56607e"/>
<rect x="15" y="1" width="1" height="12" fill="#6a7490"/>
<rect x="0" y="0" width="15" height="13" fill="#c4c8e2"/>
<rect x="1" y="0" width="1" height="13" fill="#dfe3f2"/>
<rect x="2" y="1" width="12" height="11" fill="url(#ig)"/>
<path d="M3 6.8 C4.6 2.6, 6.4 2.4, 8 5.4 C9 7.2, 10 7.4, 10.8 6 L12.8 3" stroke="#c4dca4" stroke-width="1.15" fill="none"/>
<path d="M3 10.8 C4.6 6.6, 6.4 6.4, 8 9.4 C9 11.2, 10 11.4, 10.8 10 L12.8 7" stroke="#c4dca4" stroke-width="1.15" fill="none"/>
</svg>
<div class="hd" style="top:508px"></div><svg class="ti" style="top:501px" width="16" height="14">
<rect x="1" y="13" width="14" height="1" fill="#56607e"/>
<rect x="15" y="1" width="1" height="12" fill="#6a7490"/>
<rect x="0" y="0" width="15" height="13" fill="#c4c8e2"/>
<rect x="1" y="0" width="1" height="13" fill="#dfe3f2"/>
<rect x="2" y="1" width="12" height="11" fill="url(#ig)"/>
<path d="M3 6.8 C4.6 2.6, 6.4 2.4, 8 5.4 C9 7.2, 10 7.4, 10.8 6 L12.8 3" stroke="#c4dca4" stroke-width="1.15" fill="none"/>
<path d="M3 10.8 C4.6 6.6, 6.4 6.4, 8 9.4 C9 11.2, 10 11.4, 10.8 10 L12.8 7" stroke="#c4dca4" stroke-width="1.15" fill="none"/>
</svg>
<div class="hd" style="top:528px"></div><svg class="ti" style="top:521px" width="16" height="14">
<rect x="1" y="13" width="14" height="1" fill="#56607e"/>
<rect x="15" y="1" width="1" height="12" fill="#6a7490"/>
<rect x="0" y="0" width="15" height="13" fill="#c4c8e2"/>
<rect x="1" y="0" width="1" height="13" fill="#dfe3f2"/>
<rect x="2" y="1" width="12" height="11" fill="url(#ig)"/>
<path d="M3 6.8 C4.6 2.6, 6.4 2.4, 8 5.4 C9 7.2, 10 7.4, 10.8 6 L12.8 3" stroke="#c4dca4" stroke-width="1.15" fill="none"/>
<path d="M3 10.8 C4.6 6.6, 6.4 6.4, 8 9.4 C9 11.2, 10 11.4, 10.8 10 L12.8 7" stroke="#c4dca4" stroke-width="1.15" fill="none"/>
</svg>
<div class="hd" style="top:548px"></div><svg class="ti" style="top:541px" width="16" height="14">
<rect x="1" y="13" width="14" height="1" fill="#56607e"/>
<rect x="15" y="1" width="1" height="12" fill="#6a7490"/>
<rect x="0" y="0" width="15" height="13" fill="#c4c8e2"/>
<rect x="1" y="0" width="1" height="13" fill="#dfe3f2"/>
<rect x="2" y="1" width="12" height="11" fill="url(#ig)"/>
<path d="M3 6.8 C4.6 2.6, 6.4 2.4, 8 5.4 C9 7.2, 10 7.4, 10.8 6 L12.8 3" stroke="#c4dca4" stroke-width="1.15" fill="none"/>
<path d="M3 10.8 C4.6 6.6, 6.4 6.4, 8 9.4 C9 11.2, 10 11.4, 10.8 10 L12.8 7" stroke="#c4dca4" stroke-width="1.15" fill="none"/>
</svg>
<div class="hd" style="top:568px"></div><svg class="ti" style="top:561px" width="16" height="14">
<rect x="1" y="13" width="14" height="1" fill="#56607e"/>
<rect x="15" y="1" width="1" height="12" fill="#6a7490"/>
<rect x="0" y="0" width="15" height="13" fill="#c4c8e2"/>
<rect x="1" y="0" width="1" height="13" fill="#dfe3f2"/>
<rect x="2" y="1" width="12" height="11" fill="url(#ig)"/>
<path d="M3 6.8 C4.6 2.6, 6.4 2.4, 8 5.4 C9 7.2, 10 7.4, 10.8 6 L12.8 3" stroke="#c4dca4" stroke-width="1.15" fill="none"/>
<path d="M3 10.8 C4.6 6.6, 6.4 6.4, 8 9.4 C9 11.2, 10 11.4, 10.8 10 L12.8 7" stroke="#c4dca4" stroke-width="1.15" fill="none"/>
</svg>
<div class="hd" style="top:588px"></div><svg class="ti" style="top:581px" width="16" height="14">
<rect x="1" y="13" width="14" height="1" fill="#56607e"/>
<rect x="15" y="1" width="1" height="12" fill="#6a7490"/>
<rect x="0" y="0" width="15" height="13" fill="#c4c8e2"/>
<rect x="1" y="0" width="1" height="13" fill="#dfe3f2"/>
<rect x="2" y="1" width="12" height="11" fill="url(#ig)"/>
<path d="M3 6.8 C4.6 2.6, 6.4 2.4, 8 5.4 C9 7.2, 10 7.4, 10.8 6 L12.8 3" stroke="#c4dca4" stroke-width="1.15" fill="none"/>
<path d="M3 10.8 C4.6 6.6, 6.4 6.4, 8 9.4 C9 11.2, 10 11.4, 10.8 10 L12.8 7" stroke="#c4dca4" stroke-width="1.15" fill="none"/>
</svg>
<div class="hd" style="top:608px"></div><svg class="ti" style="top:601px" width="16" height="14">
<rect x="1" y="13" width="14" height="1" fill="#56607e"/>
<rect x="15" y="1" width="1" height="12" fill="#6a7490"/>
<rect x="0" y="0" width="15" height="13" fill="#c4c8e2"/>
<rect x="1" y="0" width="1" height="13" fill="#dfe3f2"/>
<rect x="2" y="1" width="12" height="11" fill="url(#ig)"/>
<path d="M3 6.8 C4.6 2.6, 6.4 2.4, 8 5.4 C9 7.2, 10 7.4, 10.8 6 L12.8 3" stroke="#c4dca4" stroke-width="1.15" fill="none"/>
<path d="M3 10.8 C4.6 6.6, 6.4 6.4, 8 9.4 C9 11.2, 10 11.4, 10.8 10 L12.8 7" stroke="#c4dca4" stroke-width="1.15" fill="none"/>
</svg>
<div class="hd" style="top:628px"></div><svg class="ti" style="top:621px" width="16" height="14">
<rect x="1" y="13" width="14" height="1" fill="#56607e"/>
<rect x="15" y="1" width="1" height="12" fill="#6a7490"/>
<rect x="0" y="0" width="15" height="13" fill="#c4c8e2"/>
<rect x="1" y="0" width="1" height="13" fill="#dfe3f2"/>
<rect x="2" y="1" width="12" height="11" fill="url(#ig)"/>
<path d="M3 6.8 C4.6 2.6, 6.4 2.4, 8 5.4 C9 7.2, 10 7.4, 10.8 6 L12.8 3" stroke="#c4dca4" stroke-width="1.15" fill="none"/>
<path d="M3 10.8 C4.6 6.6, 6.4 6.4, 8 9.4 C9 11.2, 10 11.4, 10.8 10 L12.8 7" stroke="#c4dca4" stroke-width="1.15" fill="none"/>
</svg>
<div class="hd" style="top:648px"></div><svg class="ti" style="top:641px" width="16" height="14">
<rect x="1" y="13" width="14" height="1" fill="#56607e"/>
<rect x="15" y="1" width="1" height="12" fill="#6a7490"/>
<rect x="0" y="0" width="15" height="13" fill="#c4c8e2"/>
<rect x="1" y="0" width="1" height="13" fill="#dfe3f2"/>
<rect x="2" y="1" width="12" height="11" fill="url(#ig)"/>
<path d="M3 6.8 C4.6 2.6, 6.4 2.4, 8 5.4 C9 7.2, 10 7.4, 10.8 6 L12.8 3" stroke="#c4dca4" stroke-width="1.15" fill="none"/>
<path d="M3 10.8 C4.6 6.6, 6.4 6.4, 8 9.4 C9 11.2, 10 11.4, 10.8 10 L12.8 7" stroke="#c4dca4" stroke-width="1.15" fill="none"/>
</svg>
<div class="hd" style="top:668px"></div><svg class="ti" style="top:661px" width="16" height="14">
<rect x="1" y="13" width="14" height="1" fill="#56607e"/>
<rect x="15" y="1" width="1" height="12" fill="#6a7490"/>
<rect x="0" y="0" width="15" height="13" fill="#c4c8e2"/>
<rect x="1" y="0" width="1" height="13" fill="#dfe3f2"/>
<rect x="2" y="1" width="12" height="11" fill="url(#ig)"/>
<path d="M3 6.8 C4.6 2.6, 6.4 2.4, 8 5.4 C9 7.2, 10 7.4, 10.8 6 L12.8 3" stroke="#c4dca4" stroke-width="1.15" fill="none"/>
<path d="M3 10.8 C4.6 6.6, 6.4 6.4, 8 9.4 C9 11.2, 10 11.4, 10.8 10 L12.8 7" stroke="#c4dca4" stroke-width="1.15" fill="none"/>
</svg>
<div class="hd" style="top:688px"></div><svg class="ti" style="top:681px" width="16" height="14">
<rect x="1" y="13" width="14" height="1" fill="#56607e"/>
<rect x="15" y="1" width="1" height="12" fill="#6a7490"/>
<rect x="0" y="0" width="15" height="13" fill="#c4c8e2"/>
<rect x="1" y="0" width="1" height="13" fill="#dfe3f2"/>
<rect x="2" y="1" width="12" height="11" fill="url(#ig)"/>
<path d="M3 6.8 C4.6 2.6, 6.4 2.4, 8 5.4 C9 7.2, 10 7.4, 10.8 6 L12.8 3" stroke="#c4dca4" stroke-width="1.15" fill="none"/>
<path d="M3 10.8 C4.6 6.6, 6.4 6.4, 8 9.4 C9 11.2, 10 11.4, 10.8 10 L12.8 7" stroke="#c4dca4" stroke-width="1.15" fill="none"/>
</svg>
<div class="hd" style="top:708px"></div><svg class="ti" style="top:701px" width="16" height="14">
<rect x="1" y="13" width="14" height="1" fill="#56607e"/>
<rect x="15" y="1" width="1" height="12" fill="#6a7490"/>
<rect x="0" y="0" width="15" height="13" fill="#c4c8e2"/>
<rect x="1" y="0" width="1" height="13" fill="#dfe3f2"/>
<rect x="2" y="1" width="12" height="11" fill="url(#ig)"/>
<path d="M3 6.8 C4.6 2.6, 6.4 2.4, 8 5.4 C9 7.2, 10 7.4, 10.8 6 L12.8 3" stroke="#c4dca4" stroke-width="1.15" fill="none"/>
<path d="M3 10.8 C4.6 6.6, 6.4 6.4, 8 9.4 C9 11.2, 10 11.4, 10.8 10 L12.8 7" stroke="#c4dca4" stroke-width="1.15" fill="none"/>
</svg>
<div class="hd" style="top:728px"></div><svg class="ti" style="top:721px" width="16" height="14">
<rect x="1" y="13" width="14" height="1" fill="#56607e"/>
<rect x="15" y="1" width="1" height="12" fill="#6a7490"/>
<rect x="0" y="0" width="15" height="13" fill="#c4c8e2"/>
<rect x="1" y="0" width="1" height="13" fill="#dfe3f2"/>
<rect x="2" y="1" width="12" height="11" fill="url(#ig)"/>
<path d="M3 6.8 C4.6 2.6, 6.4 2.4, 8 5.4 C9 7.2, 10 7.4, 10.8 6 L12.8 3" stroke="#c4dca4" stroke-width="1.15" fill="none"/>
<path d="M3 10.8 C4.6 6.6, 6.4 6.4, 8 9.4 C9 11.2, 10 11.4, 10.8 10 L12.8 7" stroke="#c4dca4" stroke-width="1.15" fill="none"/>
</svg>
<!-- selection -->
<div class="a" style="left:83px;top:418px;width:24px;height:20px;background:#ff9030"><div class="a" style="left:0;top:0;width:24px;height:20px;background:#0078d7;background-clip:padding-box;border:1px dotted #000"></div></div>
<!-- scrollbar -->
<div class="a" style="left:214px;top:98px;width:1px;height:642px;background:#fff"></div>
<svg class="a" style="left:219px;top:104px;" width="7" height="6" shape-rendering="crispEdges"><rect x="3" y="0" width="1" height="1" fill="#606060"/><rect x="2" y="1" width="3" height="1" fill="#606060"/><rect x="1" y="2" width="5" height="1" fill="#606060"/><rect x="0" y="3" width="3" height="1" fill="#606060"/><rect x="4" y="3" width="3" height="1" fill="#606060"/><rect x="0" y="4" width="2" height="1" fill="#606060"/><rect x="5" y="4" width="2" height="1" fill="#606060"/><rect x="0" y="5" width="1" height="1" fill="#606060"/><rect x="6" y="5" width="1" height="1" fill="#606060"/></svg>
<div class="a" style="left:215px;top:380px;width:15px;height:360px;background:#cdcdcd"></div>

<!-- MDI child -->
<div class="a" style="left:237px;top:78px;width:664px;height:662px;border-top:1px solid #a0a0a0;border-left:1px solid #a0a0a0"></div>
<div class="a" style="left:238px;top:79px;width:663px;height:661px;border-top:1px solid #696969;border-left:1px solid #696969"></div>
<div class="a" style="left:239px;top:80px;width:662px;height:660px;background:#b9d1ea;border-top:1px solid #fff;border-left:1px solid #c6dcf0"></div>
<div class="a" style="left:240px;top:81px;width:661px;height:29px;background:linear-gradient(180deg,#93afd0,#b9d3ec)"></div>
<div class="a" style="left:246px;top:90px;width:16px;height:16px;background:#fff"></div><svg class="a" style="left:246px;top:90px;" width="16" height="16" shape-rendering="crispEdges"><rect x="12" y="2" width="1" height="1" fill="#e8b050"/><rect x="0" y="4" width="2" height="1" fill="#383838"/><rect x="3" y="4" width="4" height="1" fill="#383838"/><rect x="8" y="4" width="2" height="1" fill="#383838"/><rect x="14" y="4" width="2" height="1" fill="#383838"/><rect x="0" y="5" width="1" height="1" fill="#383838"/><rect x="2" y="5" width="2" height="1" fill="#383838"/><rect x="5" y="5" width="1" height="1" fill="#383838"/><rect x="9" y="5" width="1" height="1" fill="#383838"/><rect x="11" y="5" width="1" height="1" fill="#e8b050"/><rect x="13" y="5" width="1" height="1" fill="#383838"/><rect x="0" y="6" width="1" height="1" fill="#383838"/><rect x="2" y="6" width="2" height="1" fill="#383838"/><rect x="5" y="6" width="1" height="1" fill="#383838"/><rect x="9" y="6" width="1" height="1" fill="#383838"/><rect x="11" y="6" width="1" height="1" fill="#e8b050"/><rect x="13" y="6" width="1" height="1" fill="#383838"/><rect x="1" y="7" width="1" height="1" fill="#383838"/><rect x="3" y="7" width="3" height="1" fill="#383838"/><rect x="8" y="7" width="2" height="1" fill="#383838"/><rect x="10" y="7" width="1" height="1" fill="#e8b050"/><rect x="13" y="7" width="3" height="1" fill="#383838"/><rect x="0" y="8" width="1" height="1" fill="#383838"/><rect x="2" y="8" width="2" height="1" fill="#383838"/><rect x="5" y="8" width="1" height="1" fill="#383838"/><rect x="9" y="8" width="1" height="1" fill="#383838"/><rect x="10" y="8" width="1" height="1" fill="#e8b050"/><rect x="13" y="8" width="1" height="1" fill="#383838"/><rect x="15" y="8" width="1" height="1" fill="#383838"/><rect x="0" y="9" width="1" height="1" fill="#383838"/><rect x="2" y="9" width="2" height="1" fill="#383838"/><rect x="5" y="9" width="1" height="1" fill="#383838"/><rect x="9" y="9" width="1" height="1" fill="#383838"/><rect x="13" y="9" width="1" height="1" fill="#383838"/><rect x="15" y="9" width="1" height="1" fill="#383838"/><rect x="0" y="10" width="1" height="1" fill="#383838"/><rect x="2" y="10" width="2" height="1" fill="#383838"/><rect x="5" y="10" width="1" height="1" fill="#383838"/><rect x="9" y="10" width="1" height="1" fill="#383838"/><rect x="11" y="10" width="1" height="1" fill="#e8b050"/><rect x="13" y="10" width="1" height="1" fill="#383838"/><rect x="15" y="10" width="1" height="1" fill="#383838"/><rect x="0" y="11" width="1" height="1" fill="#383838"/><rect x="2" y="11" width="4" height="1" fill="#383838"/><rect x="8" y="11" width="2" height="1" fill="#383838"/><rect x="11" y="11" width="1" height="1" fill="#e8b050"/><rect x="13" y="11" width="3" height="1" fill="#383838"/><rect x="10" y="12" width="1" height="1" fill="#e8b050"/></svg>
<div class="a" style="left:244px;top:110px;width:657px;height:630px;background:#f0f0f0;border-top:1px solid #a0a0a0;border-left:1px solid #a0a0a0"></div>
<div class="a" style="left:245px;top:111px;width:656px;height:629px;border-top:1px solid #696969;border-left:1px solid #696969"></div>

<!-- group boxes -->
<div class="a" style="left:281px;top:142px;width:620px;height:431px;border-top:1px solid #a0a0a0;border-left:1px solid #a0a0a0;border-bottom:1px solid #a0a0a0"></div>
<div class="a" style="left:282px;top:143px;width:619px;height:431px;border-top:1px solid #fff;border-left:1px solid #fff;border-bottom:1px solid #fff"></div>
<div class="a" style="left:282px;top:572px;width:619px;height:1px;background:#a0a0a0"></div>
<div class="a" style="left:289px;top:136px;width:105px;height:10px;background:#f0f0f0"></div>

<div class="a" style="left:279px;top:589px;width:622px;height:151px;border-top:1px solid #a0a0a0;border-left:1px solid #a0a0a0;border-bottom:1px solid #a0a0a0"></div>
<div class="a" style="left:280px;top:590px;width:621px;height:149px;border-top:1px solid #fff;border-left:1px solid #fff"></div>
<div class="a" style="left:287px;top:583px;width:66px;height:10px;background:#f0f0f0"></div>

<div class="cb" style="left:426px;top:163px;width:179px;height:20px"><div class="cbi"><div class="btn"><i></i></div></div></div>
<div class="cb" style="left:426px;top:198px;width:179px;height:20px"><div class="cbi"><div class="btn"><i></i></div></div></div>
<div class="cb" style="left:426px;top:235px;width:179px;height:20px"><div class="cbi"><div class="btn"><i></i></div></div></div>
<div class="cb" style="left:426px;top:273px;width:179px;height:20px"><div class="cbi"><div class="btn"><i></i></div></div></div>
<div class="cb" style="left:426px;top:310px;width:179px;height:20px"><div class="cbi"><div class="btn"><i></i></div></div></div>
<div class="cb" style="left:426px;top:346px;width:179px;height:20px"><div class="cbi"><div class="btn"><i></i></div></div></div>
<div class="cb" style="left:426px;top:383px;width:179px;height:20px"><div class="cbi"><div class="btn"><i></i></div></div></div>
<div class="cb" style="left:426px;top:420px;width:179px;height:20px"><div class="cbi"><div class="btn"><i></i></div></div></div>
<div class="cb" style="left:426px;top:457px;width:179px;height:20px"><div class="cbi"><div class="btn"><i></i></div></div></div>
<div class="cb" style="left:762px;top:163px;width:131px;height:21px"><div class="cbi"></div></div>
<div class="cb" style="left:762px;top:198px;width:131px;height:21px"><div class="cbi"></div></div>
<div class="cb" style="left:762px;top:235px;width:131px;height:21px"><div class="cbi"></div></div>
<div class="cb" style="left:762px;top:271px;width:131px;height:20px"><div class="cbi"><div class="btn"><i></i></div></div></div>
<div class="ck" style="left:763px;top:310px"><div class="cki"></div></div>
<div class="ck" style="left:763px;top:337px"><div class="cki"></div></div>
<div class="ck" style="left:763px;top:362px"><div class="cki"></div></div>
<div class="ck" style="left:763px;top:388px"><div class="cki"></div></div>
<div class="ck" style="left:763px;top:416px"><div class="cki"></div></div>
<div class="ck" style="left:763px;top:440px"><div class="cki"></div></div>
<div class="ck" style="left:764px;top:463px"><div class="cki"></div></div>
<div class="cb" style="left:425px;top:612px;width:102px;height:20px"><div class="cbi"><div class="btn"><i></i></div></div></div>
<div class="cb" style="left:425px;top:646px;width:102px;height:20px"><div class="cbi"><div class="btn"><i></i></div></div></div>
<div class="cb" style="left:423px;top:679px;width:102px;height:20px"><div class="cbi"><div class="btn"><i></i></div></div></div>
<div class="cb" style="left:706px;top:612px;width:102px;height:20px"><div class="cbi"><div class="btn"><i></i></div></div></div>
<div class="cb" style="left:706px;top:643px;width:102px;height:20px"><div class="cbi"><div class="btn"><i></i></div></div></div>
<div class="cb" style="left:706px;top:679px;width:102px;height:20px"><div class="cbi"><div class="btn"><i></i></div></div></div>
<div class="ck" style="left:318px;top:716px"><div class="cki"></div></div>
<div class="ck" style="left:549px;top:716px"><div class="cki"><svg class="a" style="left:1px;top:1px;" width="7" height="7" shape-rendering="crispEdges"><rect x="6" y="0" width="1" height="1" fill="#000"/><rect x="5" y="1" width="2" height="1" fill="#000"/><rect x="0" y="2" width="1" height="1" fill="#000"/><rect x="4" y="2" width="3" height="1" fill="#000"/><rect x="0" y="3" width="2" height="1" fill="#000"/><rect x="3" y="3" width="3" height="1" fill="#000"/><rect x="0" y="4" width="5" height="1" fill="#000"/><rect x="1" y="5" width="3" height="1" fill="#000"/><rect x="2" y="6" width="1" height="1" fill="#000"/></svg></div></div>
<span class="t" style="left:30.60px;top:6.00px;color:#fff;transform:scaleX(0.8724);">CPS RT3S - default1</span>
<span class="t" style="left:7.57px;top:31.00px;color:#000;transform:scaleX(0.9263);">File</span>
<span class="t" style="left:39.57px;top:31.00px;color:#000;transform:scaleX(0.9286);">Edit</span>
<span class="t" style="left:73.66px;top:31.00px;color:#000;transform:scaleX(0.9447);">Program</span>
<span class="t" style="left:132.45px;top:31.00px;color:#000;transform:scaleX(0.9474);">Setting</span>
<span class="t" style="left:184.50px;top:31.00px;color:#000;transform:scaleX(0.8778);">View</span>
<span class="t" style="left:223.30px;top:31.00px;color:#000;transform:scaleX(0.9578);">Window</span>
<span class="t" style="left:280.52px;top:31.00px;color:#000;transform:scaleX(0.9760);">Help</span>
<span class="t" style="left:85.20px;top:98.00px;color:#000;transform:scaleX(0.9200);">Channel5</span>
<span class="t" style="left:85.20px;top:118.00px;color:#000;transform:scaleX(0.9200);">Channel6</span>
<span class="t" style="left:85.20px;top:138.00px;color:#000;transform:scaleX(0.9200);">Channel7</span>
<span class="t" style="left:85.20px;top:158.00px;color:#000;transform:scaleX(0.9200);">Channel8</span>
<span class="t" style="left:85.20px;top:178.00px;color:#000;transform:scaleX(0.9200);">Channel9</span>
<span class="t" style="left:85.20px;top:198.00px;color:#000;transform:scaleX(0.9200);">Channel10</span>
<span class="t" style="left:85.20px;top:218.00px;color:#000;transform:scaleX(0.9200);">A02</span>
<span class="t" style="left:85.20px;top:238.00px;color:#000;transform:scaleX(0.9200);">A14</span>
<span class="t" style="left:85.20px;top:258.00px;color:#000;transform:scaleX(0.9200);">A18</span>
<span class="t" style="left:85.20px;top:278.00px;color:#000;transform:scaleX(0.9200);">A52</span>
<span class="t" style="left:85.20px;top:298.00px;color:#000;transform:scaleX(0.9200);">A54</span>
<span class="t" style="left:85.20px;top:318.00px;color:#000;transform:scaleX(0.9200);">A56</span>
<span class="t" style="left:85.20px;top:338.00px;color:#000;transform:scaleX(0.9200);">A58</span>
<span class="t" style="left:85.20px;top:358.00px;color:#000;transform:scaleX(0.9200);">A60</span>
<span class="t" style="left:85.20px;top:378.00px;color:#000;transform:scaleX(0.9200);">A62</span>
<span class="t" style="left:85.20px;top:398.00px;color:#000;transform:scaleX(0.9200);">A64</span>
<span class="t" style="left:85.20px;top:418.00px;color:#fff;transform:scaleX(0.9200);">A66</span>
<span class="t" style="left:85.20px;top:438.00px;color:#000;transform:scaleX(0.9200);">A68</span>
<span class="t" style="left:85.20px;top:458.00px;color:#000;transform:scaleX(0.9200);">A70</span>
<span class="t" style="left:85.20px;top:478.00px;color:#000;transform:scaleX(0.9200);">A72</span>
<span class="t" style="left:85.20px;top:498.00px;color:#000;transform:scaleX(0.9200);">A74</span>
<span class="t" style="left:85.20px;top:518.00px;color:#000;transform:scaleX(0.9200);">A76</span>
<span class="t" style="left:85.20px;top:538.00px;color:#000;transform:scaleX(0.9200);">A78</span>
<span class="t" style="left:85.20px;top:558.00px;color:#000;transform:scaleX(0.9200);">A80</span>
<span class="t" style="left:85.20px;top:578.00px;color:#000;transform:scaleX(0.9200);">A82</span>
<span class="t" style="left:85.20px;top:598.00px;color:#000;transform:scaleX(0.9200);">A84</span>
<span class="t" style="left:85.20px;top:618.00px;color:#000;transform:scaleX(0.9200);">A86</span>
<span class="t" style="left:85.20px;top:638.00px;color:#000;transform:scaleX(0.9200);">A88</span>
<span class="t" style="left:85.20px;top:658.00px;color:#000;transform:scaleX(0.9200);">A90</span>
<span class="t" style="left:85.20px;top:678.00px;color:#000;transform:scaleX(0.9200);">A92</span>
<span class="t" style="left:85.20px;top:698.00px;color:#000;transform:scaleX(0.9200);">A94</span>
<span class="t" style="left:85.20px;top:718.00px;color:#000;transform:scaleX(0.9200);">A96</span>
<span class="t" style="left:265.90px;top:89.00px;color:#000;transform:scaleX(0.9598);">Channel Information</span>
<span class="t" style="left:290.15px;top:132.00px;color:#262626;letter-spacing:0.6px;word-spacing:1px;transform:scaleX(0.8517);">Digital/Analog Data</span>
<span class="t" style="left:289.00px;top:579.00px;color:#262626;letter-spacing:0.6px;word-spacing:1px;transform:scaleX(0.8092);">Analog Data</span>
<span class="t" style="left:346.70px;top:164.00px;color:#262626;letter-spacing:0.6px;word-spacing:1px;transform:scaleX(0.8034);">Channel Mode</span>
<span class="t" style="left:360.49px;top:198.00px;color:#262626;letter-spacing:0.6px;word-spacing:1px;transform:scaleX(0.8100);">Band Width</span>
<span class="t" style="left:369.86px;top:236.00px;color:#262626;letter-spacing:0.6px;word-spacing:1px;transform:scaleX(0.8446);">Scan List</span>
<span class="t" style="left:378.06px;top:273.00px;color:#262626;letter-spacing:0.6px;word-spacing:1px;transform:scaleX(0.8383);">Squelch</span>
<span class="t" style="left:324.48px;top:314.00px;color:#262626;letter-spacing:0.6px;word-spacing:1px;transform:scaleX(0.8204);">RX Ref Frequency</span>
<span class="t" style="left:326.00px;top:350.00px;color:#262626;letter-spacing:0.6px;word-spacing:1px;transform:scaleX(0.8142);">TX Ref Frequency</span>
<span class="t" style="left:381.00px;top:386.00px;color:#262626;letter-spacing:0.6px;word-spacing:1px;transform:scaleX(0.9050);">TOT[s]</span>
<span class="t" style="left:312.40px;top:420.00px;color:#262626;letter-spacing:0.6px;word-spacing:1px;transform:scaleX(0.8435);">TOT Rekey Delay[s]</span>
<span class="t" style="left:385.44px;top:458.00px;color:#262626;letter-spacing:0.6px;word-spacing:1px;transform:scaleX(0.8568);">Power</span>
<span class="t" style="left:430.80px;top:163.00px;color:#262626;letter-spacing:0.6px;word-spacing:1px;transform:scaleX(0.7952);">Analog</span>
<span class="t" style="left:430.63px;top:198.00px;color:#262626;letter-spacing:0.6px;word-spacing:1px;transform:scaleX(0.7688);">12.5kHz</span>
<span class="t" style="left:430.02px;top:235.00px;color:#262626;letter-spacing:0.6px;word-spacing:1px;transform:scaleX(0.7806);">None</span>
<span class="t" style="left:430.83px;top:273.00px;color:#262626;letter-spacing:0.6px;word-spacing:1px;transform:scaleX(0.5667);">1</span>
<span class="t" style="left:430.11px;top:310.00px;color:#262626;letter-spacing:0.6px;word-spacing:1px;transform:scaleX(0.7913);">Low</span>
<span class="t" style="left:430.11px;top:346.00px;color:#262626;letter-spacing:0.6px;word-spacing:1px;transform:scaleX(0.7913);">Low</span>
<span class="t" style="left:430.14px;top:383.00px;color:#262626;letter-spacing:0.6px;word-spacing:1px;transform:scaleX(0.8571);">120</span>
<span class="t" style="left:431.00px;top:420.00px;color:#262626;letter-spacing:0.6px;word-spacing:1px;transform:scaleX(0.7143);">0</span>
<span class="t" style="left:430.19px;top:457.00px;color:#262626;letter-spacing:0.6px;word-spacing:1px;transform:scaleX(0.8077);">High</span>
<span class="t" style="left:679.70px;top:164.00px;color:#262626;letter-spacing:0.6px;word-spacing:1px;transform:scaleX(0.8077);">Channel Name</span>
<span class="t" style="left:649.58px;top:198.00px;color:#262626;letter-spacing:0.6px;word-spacing:1px;transform:scaleX(0.8228);">RX Frequency(MHz)</span>
<span class="t" style="left:651.40px;top:236.00px;color:#262626;letter-spacing:0.6px;word-spacing:1px;transform:scaleX(0.8146);">TX Frequency(MHz)</span>
<span class="t" style="left:682.00px;top:272.00px;color:#262626;letter-spacing:0.6px;word-spacing:1px;transform:scaleX(0.8235);">Admit Criteria</span>
<span class="t" style="left:766.90px;top:162.00px;color:#262626;letter-spacing:0.6px;word-spacing:1px;transform:scaleX(0.8000);">A66</span>
<span class="t" style="left:767.00px;top:197.00px;color:#262626;letter-spacing:0.6px;word-spacing:1px;transform:scaleX(0.7547);">439.66000</span>
<span class="t" style="left:766.50px;top:234.00px;color:#262626;letter-spacing:0.6px;word-spacing:1px;transform:scaleX(0.7656);">434.66000</span>
<span class="t" style="left:767.00px;top:271.00px;color:#262626;letter-spacing:0.6px;word-spacing:1px;transform:scaleX(0.8405);">Always</span>
<span class="t" style="left:705.70px;top:306.00px;color:#262626;letter-spacing:0.6px;word-spacing:1px;transform:scaleX(0.8222);">Auto Scan</span>
<span class="t" style="left:716.87px;top:333.00px;color:#262626;letter-spacing:0.6px;word-spacing:1px;transform:scaleX(0.8292);">Rx Only</span>
<span class="t" style="left:695.01px;top:358.00px;color:#262626;letter-spacing:0.6px;word-spacing:1px;transform:scaleX(0.7910);">Lone Worker</span>
<span class="t" style="left:735.00px;top:383.00px;color:#262626;letter-spacing:0.6px;word-spacing:1px;transform:scaleX(0.8333);">VOX</span>
<span class="t" style="left:671.00px;top:412.00px;color:#262626;letter-spacing:0.6px;word-spacing:1px;transform:scaleX(0.8317);">Allow Talkaround</span>
<span class="t" style="left:682.80px;top:436.00px;color:#262626;letter-spacing:0.6px;word-spacing:1px;transform:scaleX(0.8033);">Send GPS Info</span>
<span class="t" style="left:668.89px;top:459.00px;color:#262626;letter-spacing:0.6px;word-spacing:1px;transform:scaleX(0.8055);">Receive GPS Info</span>
<span class="t" style="left:325.60px;top:611.50px;color:#262626;letter-spacing:0.6px;word-spacing:1px;transform:scaleX(0.8472);">CTCSS/DCS Dec</span>
<span class="t" style="left:309.77px;top:647.00px;color:#262626;letter-spacing:0.6px;word-spacing:1px;transform:scaleX(0.8252);">Rx Signaling System</span>
<span class="t" style="left:352.50px;top:681.00px;color:#262626;letter-spacing:0.6px;word-spacing:1px;transform:scaleX(0.8288);">QT Reverse</span>
<span class="t" style="left:610.90px;top:611.00px;color:#262626;letter-spacing:0.6px;word-spacing:1px;transform:scaleX(0.8438);">CTCSS/DCS Enc</span>
<span class="t" style="left:594.90px;top:643.00px;color:#262626;letter-spacing:0.6px;word-spacing:1px;transform:scaleX(0.8302);">Tx Signaling System</span>
<span class="t" style="left:555.12px;top:679.00px;color:#262626;letter-spacing:0.6px;word-spacing:1px;transform:scaleX(0.8750);">Non-QT/DQT Turn-off Freq</span>
<span class="t" style="left:428.71px;top:611.00px;color:#262626;letter-spacing:0.6px;word-spacing:1px;transform:scaleX(0.7903);">None</span>
<span class="t" style="left:428.40px;top:646.00px;color:#262626;letter-spacing:0.6px;word-spacing:1px;transform:scaleX(0.8833);">Off</span>
<span class="t" style="left:427.64px;top:679.00px;color:#262626;letter-spacing:0.6px;word-spacing:1px;transform:scaleX(0.7571);">180</span>
<span class="t" style="left:710.50px;top:611.00px;color:#262626;letter-spacing:0.6px;word-spacing:1px;transform:scaleX(0.7308);">88.5</span>
<span class="t" style="left:709.70px;top:643.00px;color:#262626;letter-spacing:0.6px;word-spacing:1px;transform:scaleX(0.8500);">Off</span>
<span class="t" style="left:710.01px;top:679.00px;color:#262626;letter-spacing:0.6px;word-spacing:1px;transform:scaleX(0.7935);">None</span>
<span class="t" style="left:335.77px;top:712.50px;color:#262626;letter-spacing:0.6px;word-spacing:1px;transform:scaleX(0.8304);">Display PTT ID</span>
<span class="t" style="left:566.64px;top:712.00px;color:#262626;letter-spacing:0.6px;word-spacing:1px;transform:scaleX(0.8608);">Reverse Burst/Turn-off Code</span>
<span class="t" style="left:880.75px;top:612.00px;color:#ababab;letter-spacing:0.6px;word-spacing:1px;transform:scaleX(0.8500);">Dec</span>
<span class="t" style="left:880.75px;top:633.00px;color:#ababab;letter-spacing:0.6px;word-spacing:1px;transform:scaleX(0.8500);">Dec</span>
<span class="t" style="left:880.75px;top:655.00px;color:#ababab;letter-spacing:0.6px;word-spacing:1px;transform:scaleX(0.8500);">Dec</span>
<span class="t" style="left:880.75px;top:675.00px;color:#ababab;letter-spacing:0.6px;word-spacing:1px;transform:scaleX(0.8500);">Dec</span>
</body></html>
